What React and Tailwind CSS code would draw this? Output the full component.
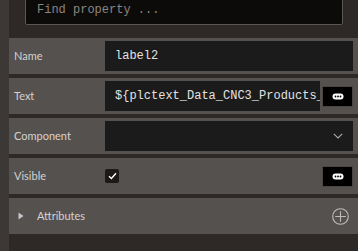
import React from 'react';

const mono = { fontFamily: '"Liberation Mono", monospace' };

function DotsButton() {
  return (
    <button className="flex h-[21px] w-[31px] items-center justify-center border border-[#4a4643] bg-black">
      <svg width="12" height="7" viewBox="0 0 12 7">
        <rect x="0.5" y="0.5" width="11" height="6" rx="3" fill="#fff" />
        <circle cx="3.5" cy="3.5" r="0.9" fill="#000" />
        <circle cx="6" cy="3.5" r="0.9" fill="#000" />
        <circle cx="8.5" cy="3.5" r="0.9" fill="#000" />
      </svg>
    </button>
  );
}

function Row({ label, children }) {
  return (
    <div className="flex h-[36px] items-center bg-[#55514e] pl-[5px] pr-[5px]">
      <span className="w-[91px] shrink-0 text-[11px] text-[#d6d2ce]">{label}</span>
      {children}
    </div>
  );
}

export default function App() {
  return (
    <div
      className="flex h-[251px] w-[358px] overflow-hidden bg-[#2e2926]"
      style={{ fontFamily: 'Lato, sans-serif' }}
    >
      <div className="w-[9px] shrink-0 bg-[#3c3835]" />
      <div className="flex min-w-0 flex-1 flex-col">
        <div className="h-[38px] shrink-0 pl-[16px] pr-[15px]">
          <div className="-mt-[5px] flex h-[30px] items-center rounded-[2px] border border-[#5a5653] bg-[#0d0b0a] pl-[11px]">
            <span className="text-[12px] text-[#8a8580]" style={mono}>Find property ...</span>
          </div>
        </div>

        <div className="flex flex-col gap-[4px]">
          <Row label="Name">
            <div className="flex h-[30px] flex-1 items-center bg-[#1b1b1b] pl-[10px]">
              <span className="text-[12px] text-[#e2e2e2]" style={mono}>label2</span>
            </div>
          </Row>

          <Row label="Text">
            <div className="flex h-[30px] min-w-0 flex-1 items-center overflow-hidden bg-[#1b1b1b] pl-[10px]">
              <span className="whitespace-nowrap text-[12px] text-[#e2e2e2]" style={mono}>
                {'${plctext_Data_CNC3_Products_Name}'}
              </span>
            </div>
            <div className="ml-[2px] shrink-0">
              <DotsButton />
            </div>
          </Row>

          <Row label="Component">
            <div className="flex h-[30px] flex-1 items-center justify-end bg-[#1b1b1b] pr-[10px]">
              <svg width="10" height="6" viewBox="0 0 10 6">
                <path d="M0.8 0.8 L5 5 L9.2 0.8" fill="none" stroke="#a4acb2" strokeWidth="1.1" />
              </svg>
            </div>
          </Row>

          <Row label="Visible">
            <div className="flex h-[14px] w-[14px] items-center justify-center rounded-[2px] bg-[#1c1a18]">
              <svg width="9" height="8" viewBox="0 0 9 8">
                <path d="M1 4.3 L3.4 6.5 L8 1.2" fill="none" stroke="#fff" strokeWidth="1.4" />
              </svg>
            </div>
            <div className="ml-auto">
              <DotsButton />
            </div>
          </Row>

          <div className="flex h-[36px] items-center bg-[#55514e] pl-[9px] pr-[9px]">
            <svg width="6" height="8" viewBox="0 0 6 8" className="shrink-0">
              <path d="M0.5 0.5 L5.5 4 L0.5 7.5 Z" fill="#c4c6d2" />
            </svg>
            <span className="ml-[13px] text-[11px] text-[#d6d2ce]">Attributes</span>
            <svg width="17" height="17" viewBox="0 0 17 17" className="ml-auto">
              <circle cx="8.5" cy="8.5" r="7.8" fill="none" stroke="#bdbdbd" strokeWidth="1.1" />
              <path d="M8.5 3.2 V13.8 M3.2 8.5 H13.8" stroke="#bdbdbd" strokeWidth="1.1" />
            </svg>
          </div>
        </div>
      </div>
    </div>
  );
}
